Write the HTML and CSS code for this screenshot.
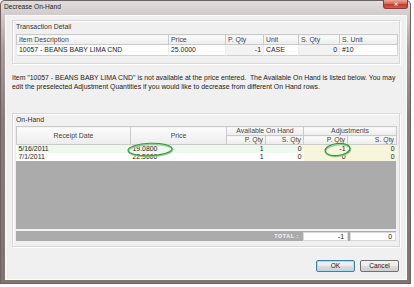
FILE: index.html
```html
<!DOCTYPE html>
<html lang="en">
<head>
    <meta charset="UTF-8">
    <meta name="viewport" content="width=device-width, initial-scale=1.0">
    <title>Decrease On-Hand</title>
    <link rel="stylesheet" href="styles.css">
</head>
<body>
    <div class="window">
        <div class="titlebar">
            <span class="title">Decrease On-Hand</span>
            <span class="btn-close">&#x2715;</span>
        </div>
        <div class="client">

            <div class="group group-trans">
                <div class="group-label">Transaction Detail</div>
                <table class="grid grid-trans">
                    <colgroup>
                        <col class="t1"><col class="t2"><col class="t3"><col class="t4"><col class="t5"><col class="t6">
                    </colgroup>
                    <tr class="head">
                        <th>Item Description</th>
                        <th>Price</th>
                        <th>P. Qty</th>
                        <th>Unit</th>
                        <th>S. Qty</th>
                        <th>S. Unit</th>
                    </tr>
                    <tr class="row">
                        <td>10057 - BEANS BABY LIMA CND</td>
                        <td>25.0000</td>
                        <td class="num ro">-1</td>
                        <td>CASE</td>
                        <td class="num ro">0</td>
                        <td>#10</td>
                    </tr>
                </table>
            </div>

            <p class="message">Item "10057 - BEANS BABY LIMA CND" is not available at the price entered.&nbsp; The Available On Hand is listed below. You may edit the preselected Adjustment Quantities if you would like to decrease from different On Hand rows.</p>

            <div class="group group-onhand">
                <div class="group-label">On-Hand</div>
                <div class="onhand">
                    <table class="grid grid-onhand">
                        <colgroup>
                            <col class="o1"><col class="o2"><col class="o3"><col class="o4"><col class="o5"><col class="o6">
                        </colgroup>
                        <tr class="head">
                            <th rowspan="2" class="center">Receipt Date</th>
                            <th rowspan="2" class="center">Price</th>
                            <th colspan="2" class="center">Available On Hand</th>
                            <th colspan="2" class="center">Adjustments</th>
                        </tr>
                        <tr class="head">
                            <th class="num">P. Qty</th>
                            <th class="num">S. Qty</th>
                            <th class="num">P. Qty</th>
                            <th class="num">S. Qty</th>
                        </tr>
                        <tr class="row selected">
                            <td>5/16/2011</td>
                            <td>19.0800</td>
                            <td class="num">1</td>
                            <td class="num">0</td>
                            <td class="num adj">-1</td>
                            <td class="num adj">0</td>
                        </tr>
                        <tr class="row">
                            <td>7/1/2011</td>
                            <td>22.5000</td>
                            <td class="num">1</td>
                            <td class="num">0</td>
                            <td class="num adj">0</td>
                            <td class="num adj">0</td>
                        </tr>
                    </table>
                    <div class="grid-empty"></div>
                    <div class="total-row">
                        <span class="total-label">TOTAL :</span>
                        <span class="total-cell wide">-1</span>
                        <span class="total-cell">0</span>
                    </div>
                    <svg class="marks" width="380" height="115" viewBox="0 0 380 115">
                        <ellipse cx="134.5" cy="24.5" rx="22" ry="6" fill="none" stroke="#9ac99c" stroke-width="1.6" transform="rotate(-2 134.5 24.5)"/>
                        <ellipse cx="134" cy="23.5" rx="22" ry="6.2" fill="none" stroke="#2f9a3a" stroke-width="1.1" transform="rotate(-2 134 23.5)"/>
                        <ellipse cx="322" cy="24.5" rx="12.5" ry="5.8" fill="none" stroke="#9ac99c" stroke-width="1.6" transform="rotate(-6 322 24.5)"/>
                        <ellipse cx="321.5" cy="23.5" rx="12.5" ry="6" fill="none" stroke="#2f9a3a" stroke-width="1.1" transform="rotate(-6 321.5 23.5)"/>
                    </svg>
                </div>
            </div>

            <div class="buttons">
                <button type="button" class="btn btn-ok">OK</button>
                <button type="button" class="btn">Cancel</button>
            </div>
        </div>
    </div>
</body>
</html>
```

FILE: styles.css
```css
body {
    margin: 0;
    background-color: #ffffff;
    font-family: "Liberation Sans", Arial, sans-serif;
    font-size: 6.9px;
    color: #222;
}
.window {
    width: 411px;
    height: 284px;
    box-sizing: border-box;
    padding: 0 4px 4px 5px;
    display: flex;
    flex-direction: column;
    border-radius: 5px 5px 0 0;
    background: linear-gradient(to bottom, #e2dede 0, #d3cccc 14px, #a89b9b 50px, #8a7b7b 120px, #827373 100%);
    box-shadow: inset 0 0 0 1px #6e6161;
}
.titlebar {
    height: 15px;
    display: flex;
    justify-content: space-between;
    align-items: flex-start;
}
.title {
    margin-left: -1px;
    line-height: 14px;
    font-size: 6.6px;
    color: #1e1e1e;
}
.btn-close {
    width: 25px;
    height: 9px;
    margin-right: -1px;
    box-sizing: border-box;
    border: 1px solid #8c3a33;
    border-top: none;
    border-radius: 0 0 3px 3px;
    background: linear-gradient(to bottom, #e9a89d 0, #d56a5a 45%, #c23b2b 55%, #d65d4a 100%);
    color: #fff;
    font-size: 5px;
    font-weight: bold;
    line-height: 8px;
    text-align: center;
}
.client {
    flex: 1;
    background-color: #f0f0f0;
    border: 1px solid #fbfbfb;
    padding: 4px 6px 0 6px;
}
.group {
    box-sizing: border-box;
    border: 1px solid #d8d8d8;
    box-shadow: inset 1px 1px 0 #fff, 1px 1px 0 #fff;
    padding: 0 2px 0 3px;
}
.group-label {
    line-height: 11px;
    color: #333;
}
.group-trans {
    height: 44px;
}
.group-trans .group-label {
    margin-bottom: 2px;
}
.grid {
    border-collapse: collapse;
    table-layout: fixed;
    background-color: #fff;
}
.grid th {
    font-weight: normal;
    color: #444;
    text-align: left;
    padding: 0 2px;
    height: 9px;
    line-height: 9px;
    border: 1px solid #cacaca;
    background: linear-gradient(to bottom, #fcfcfc, #ececec);
    white-space: nowrap;
}
.grid td {
    padding: 0 2px;
    white-space: nowrap;
    overflow: hidden;
}
.grid .num {
    text-align: right;
}
.grid .center {
    text-align: center;
}
.grid-trans {
    width: 381px;
    border: 1px solid #d0d0d0;
}
.grid-trans td {
    height: 10px;
    line-height: 10px;
    border-left: 1px solid #ebebeb;
}
.grid-trans td.ro {
    background-color: #f3f3f3;
}
.t1 { width: 152px; }
.t2 { width: 57px; }
.t3 { width: 38px; }
.t4 { width: 35px; }
.t5 { width: 41px; }
.t6 { width: 58px; }

.message {
    margin: 9px 0 0 0;
    line-height: 9px;
    color: #222;
}
.group-onhand {
    margin-top: 22px;
    height: 134px;
}
.group-onhand .group-label {
    margin-bottom: 1px;
}
.onhand {
    position: relative;
    width: 380px;
    height: 115px;
    display: flex;
    flex-direction: column;
    background-color: #ababab;
}
.grid-onhand {
    width: 380px;
}
.grid-onhand th {
    height: 8px;
    line-height: 8px;
}
.grid-onhand td {
    height: 8px;
    line-height: 8px;
    background-color: #fff;
}
.grid-onhand .selected td {
    background-color: #eef8ee;
}
.grid-onhand td.adj,
.grid-onhand .selected td.adj {
    background-color: #f7f5dc;
}
.o1 { width: 114px; }
.o2 { width: 96px; }
.o3 { width: 39px; }
.o4 { width: 38px; }
.o5 { width: 44px; }
.o6 { width: 49px; }

.grid-empty {
    flex: 1;
}
.total-row {
    height: 12px;
    box-sizing: border-box;
    border-top: 2px solid #f2f2f2;
    display: flex;
    justify-content: flex-end;
    align-items: center;
    gap: 2px;
}
.total-label {
    padding-right: 2px;
    color: #f6f6f6;
    font-weight: bold;
    font-size: 5.4px;
    letter-spacing: 0.6px;
}
.total-cell {
    width: 46px;
    height: 9px;
    box-sizing: border-box;
    background-color: #fff;
    border: 1px solid #d8d8d8;
    text-align: right;
    padding-right: 3px;
    line-height: 8px;
}
.total-cell.wide {
    width: 45px;
}
.marks {
    position: absolute;
    top: 0;
    left: 0;
    pointer-events: none;
}
.buttons {
    margin-top: 13px;
    padding-right: 1px;
    display: flex;
    justify-content: flex-end;
    gap: 5px;
}
.btn {
    width: 39px;
    height: 12px;
    box-sizing: border-box;
    padding: 0;
    border: 1px solid #707070;
    border-radius: 2px;
    background: linear-gradient(to bottom, #f2f2f2 0, #ebebeb 50%, #dddddd 50%, #cfcfcf 100%);
    font-family: "Liberation Sans", Arial, sans-serif;
    font-size: 6.6px;
    line-height: 10px;
    color: #222;
}
.btn-ok {
    border-color: #3c7fb1;
    box-shadow: inset 0 0 0 1px #a8dcf4;
}
```
